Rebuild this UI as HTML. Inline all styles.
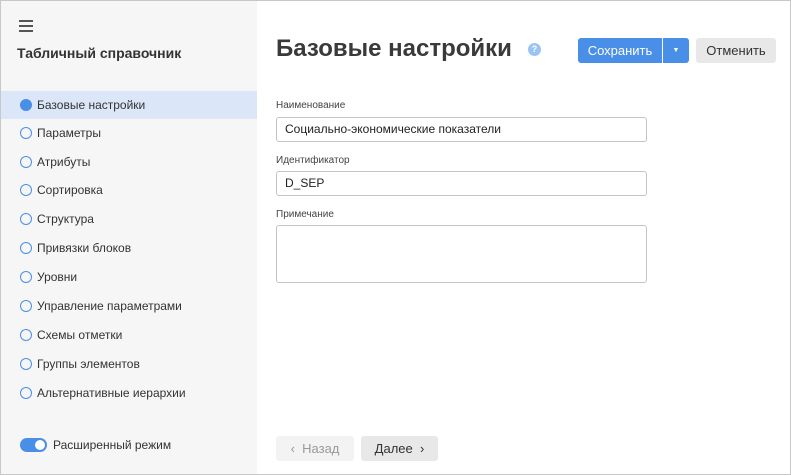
<!DOCTYPE html>
<html><head><meta charset="utf-8"><style>
*{box-sizing:border-box;margin:0;padding:0}
body{width:791px;height:475px;font-family:"Liberation Sans",sans-serif;color:#333;background:#fff;position:relative;overflow:hidden}
.frame{position:absolute;left:0;top:0;width:791px;height:475px;border:1px solid #c8c8c8;}
.side{position:absolute;left:1px;top:1px;width:256px;height:473px;background:#f6f6f6}
.a{position:absolute}
.burger{left:19px;top:20px;width:14px}
.burger i{display:block;height:2px;background:#555;margin-bottom:3px}
.stitle{left:17px;top:45px;font-size:14px;font-weight:bold;color:#333}
.nav{position:absolute;left:0;width:257px;height:28px;font-size:12px;line-height:28px;padding-left:37px;color:#333}
.nav::before{content:"";position:absolute;left:20px;top:8px;width:12px;height:12px;border:1.5px solid #4a8fe7;border-radius:50%;box-sizing:border-box}
.nav.on{background:#dbe7f8}
.nav.on::before{background:#4a8fe7}
.title{left:276px;top:35px;font-size:24px;font-weight:bold;color:#3a3a3a}
.q{left:528px;top:43px;width:13px;height:13px;border-radius:50%;background:#9cc4f3;color:#fff;font-size:9px;font-weight:bold;text-align:center;line-height:13px}
.btn{position:absolute;height:25px;line-height:25px;font-size:13px;text-align:center;border-radius:3px}
.lbl{position:absolute;left:276px;font-size:10px;color:#444}
.inp{position:absolute;left:276px;width:371px;border:1px solid #c4c4c4;border-radius:3px;font-size:12px;padding-left:8px;color:#222}
</style></head><body>
<div class="side"></div>
<div class="a burger"><i></i><i></i><i></i></div>
<div class="a stitle">Табличный справочник</div>
<div class="nav on" style="top:91px">Базовые настройки</div>
<div class="nav" style="top:119px">Параметры</div>
<div class="nav" style="top:148px">Атрибуты</div>
<div class="nav" style="top:176px">Сортировка</div>
<div class="nav" style="top:205px">Структура</div>
<div class="nav" style="top:234px">Привязки блоков</div>
<div class="nav" style="top:263px">Уровни</div>
<div class="nav" style="top:292px">Управление параметрами</div>
<div class="nav" style="top:321px">Схемы отметки</div>
<div class="nav" style="top:350px">Группы элементов</div>
<div class="nav" style="top:379px">Альтернативные иерархии</div>
<div class="a" style="left:20px;top:438px;width:27px;height:14px;border-radius:7px;background:#4a8fe7"><div style="position:absolute;right:2px;top:2px;width:10px;height:10px;border-radius:50%;background:#fff"></div></div>
<div class="a" style="left:53px;top:438px;font-size:12px">Расширенный режим</div>

<div class="a title">Базовые настройки</div>
<div class="a q">?</div>
<div class="btn" style="left:578px;top:38px;width:84px;background:#4a8fe7;color:#fff;border-radius:3px 0 0 3px">Сохранить</div>
<div class="btn" style="left:663px;top:38px;width:26px;background:#4a8fe7;color:#fff;border-radius:0 3px 3px 0;font-size:7px">▼</div>
<div class="btn" style="left:696px;top:38px;width:80px;background:#e8e8e8;color:#333">Отменить</div>

<div class="lbl" style="top:100px">Наименование</div>
<div class="inp" style="top:117px;height:25px;line-height:23px">Социально-экономические показатели</div>
<div class="lbl" style="top:155px">Идентификатор</div>
<div class="inp" style="top:171px;height:25px;line-height:23px">D_SEP</div>
<div class="lbl" style="top:209px">Примечание</div>
<div class="inp" style="top:225px;height:58px"></div>

<div class="btn" style="left:276px;top:436px;width:78px;background:#f3f3f3;color:#999">‹&nbsp; Назад</div>
<div class="btn" style="left:361px;top:436px;width:77px;background:#e8e8e8;color:#333">Далее &nbsp;›</div>
<div class="frame"></div>
</body></html>
